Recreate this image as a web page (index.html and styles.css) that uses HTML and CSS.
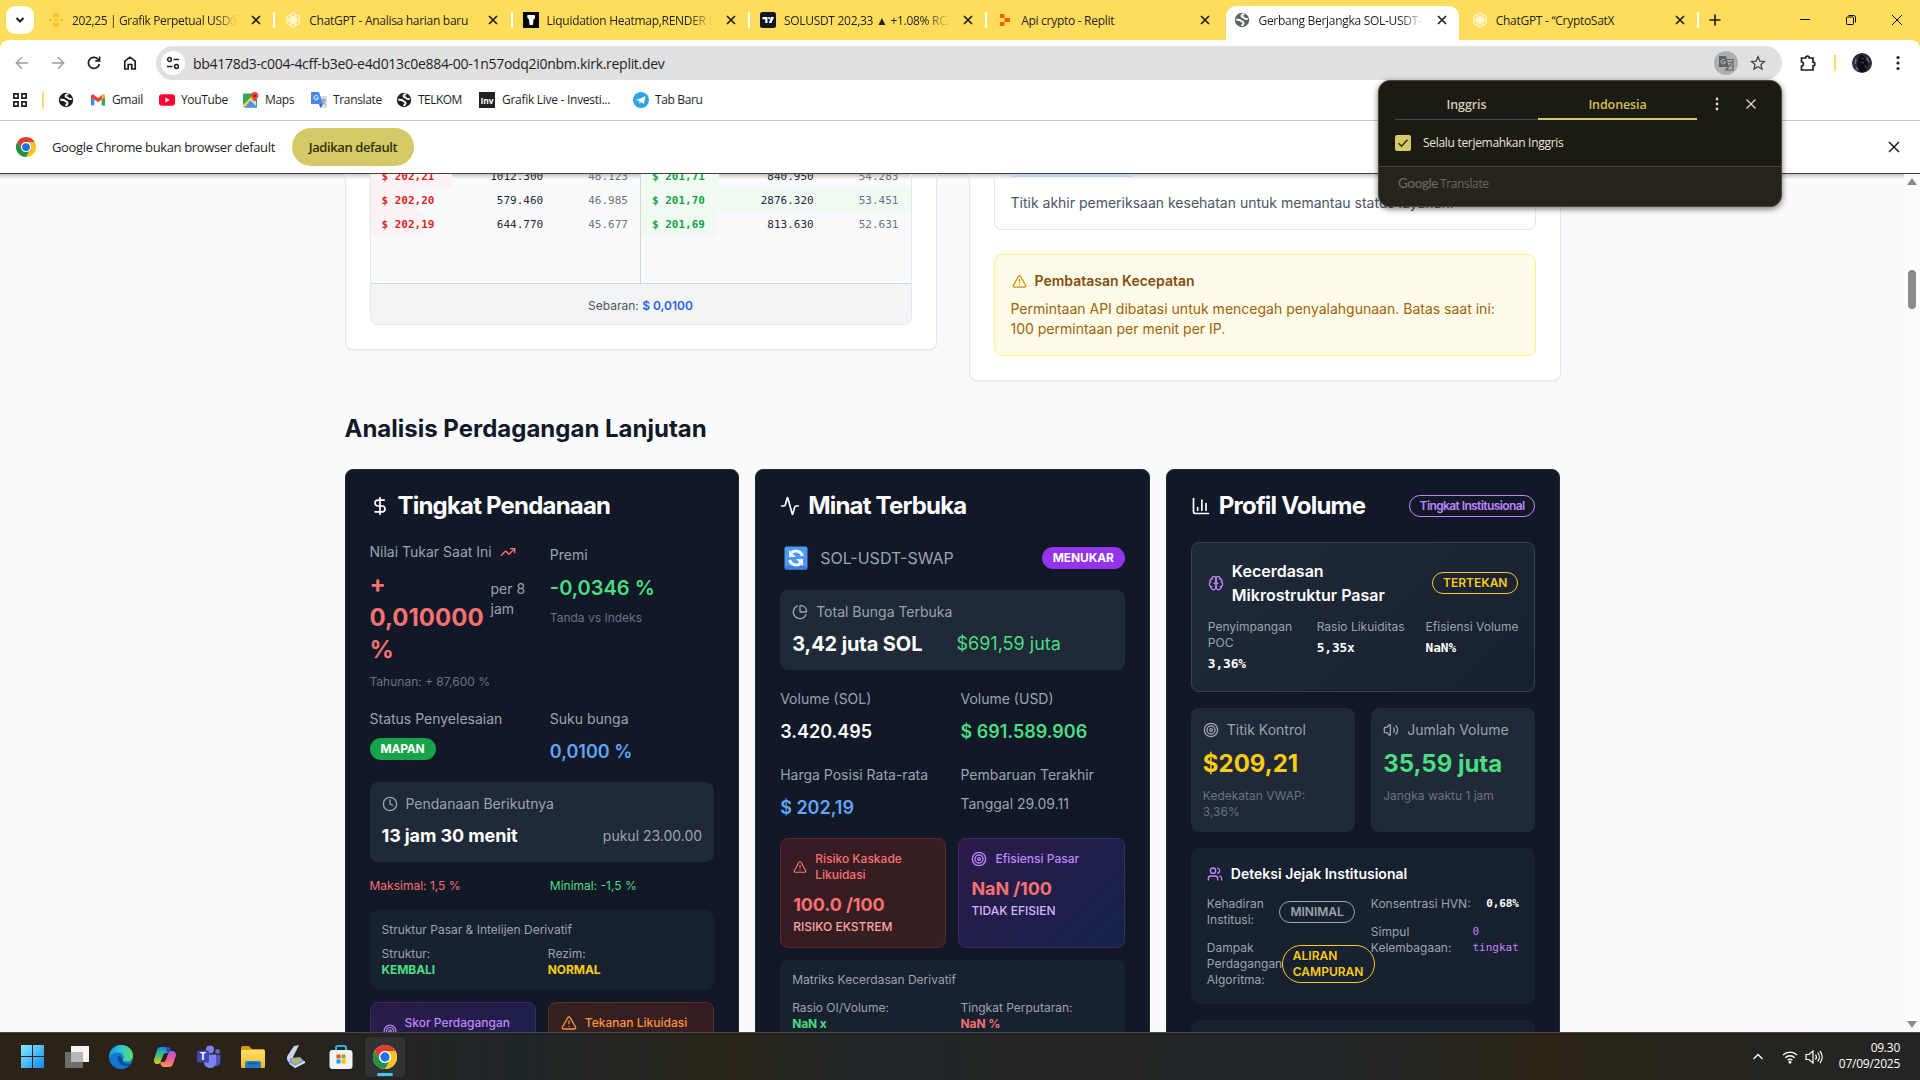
FILE: index.html
```html
<!DOCTYPE html>
<html lang="id">
<head>
<meta charset="utf-8">
<title>Gerbang Berjangka SOL-USDT-SWAP</title>
<link rel="stylesheet" href="styles.css">
</head>
<body>
<svg class="defs" width="0" height="0">
  <defs>
    <symbol id="x" viewBox="0 0 16 16"><path d="M4 4l8 8M12 4l-8 8" fill="none" stroke="currentColor" stroke-width="1.7"/></symbol>
    <symbol id="globe" viewBox="0 0 16 16"><circle cx="8" cy="8" r="7.200" fill="currentColor"/><path d="M2.300 7.800c2.200-.2 3.700-.3 4.700 1 .8 1.200 2.800.6 2.600 2.400-.1 1.200-1.500 1.300-1.700 2.800M10.500 2.300c-1.500-.4-3.300.5-3 2 .3 1.300 2.200.5 2.500 1.800.3 1 2 1 3.700.9" fill="none" stroke="#fff" stroke-width="1.900"/></symbol>
    <symbol id="gpt" viewBox="0 0 16 16"><g fill="none" stroke="#fff8dd" stroke-width="1.100"><ellipse cx="8" cy="5" rx="3" ry="4"/><ellipse cx="8" cy="5" rx="3" ry="4" transform="rotate(60 8 8)"/><ellipse cx="8" cy="5" rx="3" ry="4" transform="rotate(120 8 8)"/><ellipse cx="8" cy="5" rx="3" ry="4" transform="rotate(180 8 8)"/><ellipse cx="8" cy="5" rx="3" ry="4" transform="rotate(240 8 8)"/><ellipse cx="8" cy="5" rx="3" ry="4" transform="rotate(300 8 8)"/></g></symbol>
    <symbol id="chrome" viewBox="0 0 48 48"><circle cx="24" cy="24" r="24" fill="#fff"/><path d="M24 12h20.800A24 24 0 0 0 3.200 12l10.400 18A12 12 0 0 1 24 12z" fill="#e33b2e"/><path d="M34.400 30L24 48A24 24 0 0 0 44.800 12H24a12 12 0 0 1 10.400 18z" fill="#fcc31e"/><path d="M13.600 30L3.200 12A24 24 0 0 0 24 48l10.400-18a12 12 0 0 1-20.800 0z" fill="#229342"/><circle cx="24" cy="24" r="11.500" fill="#fff"/><circle cx="24" cy="24" r="9.300" fill="#1a73e8"/></symbol>
    <symbol id="target" viewBox="0 0 24 24"><g class="ln"><circle cx="12" cy="12" r="10"/><circle cx="12" cy="12" r="6"/><circle cx="12" cy="12" r="2"/></g></symbol>
    <symbol id="alert" viewBox="0 0 24 24"><g class="ln"><path d="m21.730 18-8-14a2 2 0 0 0-3.480 0l-8 14A2 2 0 0 0 4 21h16a2 2 0 0 0 1.730-3"/><path d="M12 9v4"/><path d="M12 17h.01"/></g></symbol>
    <symbol id="dollar" viewBox="0 0 24 24"><g class="ln"><path d="M12 2v20"/><path d="M17 5H9.500a3.500 3.500 0 0 0 0 7h5a3.500 3.500 0 0 1 0 7H6"/></g></symbol>
    <symbol id="trend" viewBox="0 0 24 24"><g class="ln"><path d="m22 7-8.500 8.500-5-5L2 17"/><path d="M16 7h6v6"/></g></symbol>
    <symbol id="clock" viewBox="0 0 24 24"><g class="ln"><circle cx="12" cy="12" r="10"/><path d="M12 6v6l4 2"/></g></symbol>
    <symbol id="activity" viewBox="0 0 24 24"><g class="ln"><path d="M22 12h-2.480a2 2 0 0 0-1.930 1.460l-2.350 8.360a.25.25 0 0 1-.48 0L9.240 2.180a.25.25 0 0 0-.48 0l-2.350 8.360A2 2 0 0 1 4.490 12H2"/></g></symbol>
    <symbol id="pie" viewBox="0 0 24 24"><g class="ln"><path d="M21 12c.552 0 1.005-.449.950-.998a10 10 0 0 0-8.953-8.951c-.55-.055-.998.398-.998.950v8a1 1 0 0 0 1 1z"/><path d="M21.210 15.890A10 10 0 1 1 8 2.830"/></g></symbol>
    <symbol id="chart" viewBox="0 0 24 24"><g class="ln"><path d="M3 3v16a2 2 0 0 0 2 2h16"/><path d="M18 17V9"/><path d="M13 17V5"/><path d="M8 17v-3"/></g></symbol>
    <symbol id="brain" viewBox="0 0 24 24"><g class="ln"><path d="M12 5a3 3 0 1 0-5.997.125 4 4 0 0 0-2.526 5.770 4 4 0 0 0 .556 6.588A4 4 0 1 0 12 18Z"/><path d="M12 5a3 3 0 1 1 5.997.125 4 4 0 0 1 2.526 5.770 4 4 0 0 1-.556 6.588A4 4 0 1 1 12 18Z"/><path d="M15 13a4.500 4.500 0 0 1-3-4 4.500 4.500 0 0 1-3 4"/><path d="M17.599 6.500a3 3 0 0 0 .399-1.375M6.003 5.125A3 3 0 0 0 6.401 6.500M3.477 10.896a4 4 0 0 1 .585-.396M19.938 10.500a4 4 0 0 1 .585.396M6 18a4 4 0 0 1-1.967-.516M19.967 17.484A4 4 0 0 1 18 18"/></g></symbol>
    <symbol id="volume" viewBox="0 0 24 24"><g class="ln"><path d="M11 4.702a.705.705 0 0 0-1.203-.498L6.413 7.587A1.400 1.400 0 0 1 5.416 8H3a1 1 0 0 0-1 1v6a1 1 0 0 0 1 1h2.416a1.400 1.400 0 0 1 .997.413l3.383 3.384A.705.705 0 0 0 11 19.298z"/><path d="M16 9a5 5 0 0 1 0 6"/><path d="M19.364 18.364a9 9 0 0 0 0-12.728"/></g></symbol>
    <symbol id="users" viewBox="0 0 24 24"><g class="ln"><path d="M16 21v-2a4 4 0 0 0-4-4H6a4 4 0 0 0-4 4v2"/><circle cx="9" cy="7" r="4"/><path d="M22 21v-2a4 4 0 0 0-3-3.870"/><path d="M16 3.130a4 4 0 0 1 0 7.750"/></g></symbol>
    <linearGradient id="win" x2="1" y2="1"><stop stop-color="#8ceaff"/><stop offset="1" stop-color="#0a8df5"/></linearGradient>
    <linearGradient id="edge" x2="1" y2="0"><stop stop-color="#1797dc"/><stop offset=".5" stop-color="#2fc2d8"/><stop offset="1" stop-color="#5fdf55"/></linearGradient>
    <linearGradient id="folder" x2="0" y2="1"><stop stop-color="#ffdf6b"/><stop offset="1" stop-color="#f8b92a"/></linearGradient>
    <linearGradient id="cop1" x2="0" y2="1"><stop stop-color="#1a86e8"/><stop offset=".5" stop-color="#3fc07a"/><stop offset="1" stop-color="#f5c320"/></linearGradient>
    <linearGradient id="cop2" x2="0" y2="1"><stop stop-color="#a65af0"/><stop offset=".5" stop-color="#ee5a9a"/><stop offset="1" stop-color="#ff9a4a"/></linearGradient>
  </defs>
</svg>

<header class="tabs">
  <div class="tab-search"><svg width="12" height="12" viewBox="0 0 12 12"><path d="M2.500 4L6 7.500 9.500 4" fill="none" stroke="#1f1f1f" stroke-width="2"/></svg></div>
  <div class="tab"><svg class="fav" viewBox="0 0 16 16"><path d="M8 .5l3.600 3.600-1.700 1.700L8 3.900 6.100 5.800 4.400 4.100zM2.200 6.300L3.900 8 2.200 9.700.5 8zM8 6.300L9.700 8 8 9.700 6.300 8zM13.800 6.300L15.500 8l-1.700 1.700L12.100 8zM6.100 10.200L8 12.100l1.900-1.900 1.700 1.700L8 15.500l-3.600-3.600z" fill="#fbbc2c"/></svg><span class="t fade t1">202,25 | Grafik Perpetual USDⓈ-M</span><svg class="cl"><use href="#x"/></svg></div>
  <div class="tab"><svg class="fav"><use href="#gpt"/></svg><span class="t">ChatGPT - Analisa harian baru</span><svg class="cl"><use href="#x"/></svg></div>
  <div class="tab"><svg class="fav" viewBox="0 0 16 16"><path fill="#050505" d="M0 0h16v16H0z"/><path d="M4.500 3h7l.7 1.500-.7 2.500-1 .5-.5 5.500H6.500L6 7.500l-1-.5-.8-2.500z" fill="#fff"/></svg><span class="t fade">Liquidation Heatmap,RENDER Liq</span><svg class="cl"><use href="#x"/></svg></div>
  <div class="tab"><svg class="fav" viewBox="0 0 16 16"><rect width="16" height="16" rx="2.500" fill="#131722"/><path d="M2.500 5h5v6H5.200V7.300H2.500zM11 5h3l-2.500 6H8.800z" fill="#fff"/><circle cx="9.200" cy="6.100" r="1.150" fill="#fff"/></svg><span class="t fade">SOLUSDT 202,33 ▲ +1.08% RCZ</span><svg class="cl"><use href="#x"/></svg></div>
  <div class="tab plain"><svg class="fav" viewBox="0 0 16 16"><path d="M3 2h4.500v4H3zM7.500 6H13v4H7.500zM3 10h4.500v4H3z" fill="#f26207"/></svg><span class="t">Api crypto - Replit</span><svg class="cl"><use href="#x"/></svg></div>
  <div class="tab plain active"><svg class="fav grey"><use href="#globe"/></svg><span class="t fade">Gerbang Berjangka SOL-USDT-SWAP</span><svg class="cl"><use href="#x"/></svg></div>
  <div class="tab"><svg class="fav"><use href="#gpt"/></svg><span class="t">ChatGPT - “CryptoSatX</span><svg class="cl"><use href="#x"/></svg></div>
  <svg class="plus" width="16" height="16" viewBox="0 0 16 16"><path d="M8 2.500v11M2.500 8h11" stroke="#1f1f1f" stroke-width="1.700"/></svg>
  <div class="win">
    <svg width="12" height="12" viewBox="0 0 12 12"><path d="M1 5.500h10" stroke="#000"/></svg>
    <svg width="12" height="12" viewBox="0 0 12 12"><path d="M3.500 1.500h5a2 2 0 0 1 2 2v5" fill="none" stroke="#000"/><rect x="1.500" y="3" width="7" height="7.500" rx="1" fill="none" stroke="#000"/></svg>
    <svg width="12" height="12" viewBox="0 0 12 12"><path d="M1 1l10 10M11 1L1 11" stroke="#000"/></svg>
  </div>
</header>

<div class="toolbar">
  <div class="nav">
    <svg class="dim" viewBox="0 0 16 16"><path d="M14 8H2.500M8 2.200L2.300 8 8 13.800"/></svg>
    <svg class="dim" viewBox="0 0 16 16"><path d="M2 8h11.500M8 2.200L13.700 8 8 13.800"/></svg>
    <svg viewBox="0 0 16 16"><path d="M13.300 9A5.500 5.500 0 1 1 11.800 4L13.500 5.600M13.600 1.500v4.400H9.200"/></svg>
    <svg viewBox="0 0 16 16"><path d="M2.800 14V6.200L8 2.200l5.200 4V14H9.800V9.500H6.200V14z"/></svg>
  </div>
  <div class="omni">
    <div class="site"><svg width="16" height="16" viewBox="0 0 16 16" fill="none" stroke="#1f1f1f" stroke-width="1.500"><circle cx="4.500" cy="4.500" r="1.900"/><path d="M8.500 4.500H14M2 11.500h5.500"/><circle cx="11.500" cy="11.500" r="1.900"/></svg></div>
    <span class="url">bb4178d3-c004-4cff-b3e0-e4d013c0e884-00-1n57odq2i0nbm.kirk.replit.dev</span>
    <div class="tr"><svg width="16" height="16" viewBox="0 0 16 16"><path d="M1 1h7l3 11H1z" fill="#5f6368"/><path d="M9 4.500h6V15H8l2.500-3" fill="none" stroke="#5f6368" stroke-width="1.200"/><path d="M7 5.400a2.200 2.200 0 1 0 .4 1.600H5.600" fill="none" stroke="#c9c9c9"/><path d="M10.500 7.500h4M12.500 6.500v1M13.700 7.500c-.4 2-1.500 3.500-2.800 4.300M11.500 9l2.500 3" fill="none" stroke="#5f6368" stroke-width=".9"/></svg></div>
    <svg width="16" height="16" viewBox="0 0 18 18"><path d="M9 2l2.100 4.800 5.200.5-3.900 3.500 1.100 5.100L9 13.200l-4.500 2.700 1.100-5.100-3.900-3.500 5.200-.5z" fill="none" stroke="#474747" stroke-width="1.500"/></svg>
  </div>
  <svg class="ext" width="18" height="18" viewBox="0 0 18 18"><path d="M2.500 4h4.200a1.800 1.800 0 0 1 3.600 0H14v4.200a1.800 1.800 0 0 1 0 3.600V16H2.500v-3.800c2.500 0 2.500-4.200 0-4.200z" fill="none" stroke="#1f1f1f" stroke-width="1.700"/></svg>
  <i class="vsep"></i>
  <svg class="avatar" width="20" height="20" viewBox="0 0 20 20"><circle cx="10" cy="10" r="10" fill="#2a2d42"/><path d="M8 2c3-1 5 1 5 4l3 4-2 8-5 1-4-5 1-6z" fill="#0b0c14"/><path d="M9 5l3 1M8 9l4 1M13 12l1 3" stroke="#8b2f3a"/><path d="M15 5l2 4M4 6l-1 5M4 14l2 3" stroke="#6b7296" stroke-width="1.500"/></svg>
  <svg class="dots" width="4" height="16" viewBox="0 0 4 16" fill="#1f1f1f"><circle cx="2" cy="2.500" r="1.600"/><circle cx="2" cy="8" r="1.600"/><circle cx="2" cy="13.500" r="1.600"/></svg>
</div>

<div class="bookmarks">
  <svg class="grid4" width="16" height="16" viewBox="0 0 16 16" fill="none" stroke="#1f1f1f" stroke-width="1.700"><path d="M1.900 1.900h4.200v4.200H1.900zM9.900 1.900h4.200v4.200H9.900zM1.900 9.900h4.200v4.200H1.900zM9.900 9.900h4.200v4.200H9.900z"/></svg>
  <i class="vsep"></i>
  <svg class="bi g1"><use href="#globe"/></svg>
  <span class="bm b1"><svg class="bi" viewBox="0 0 16 16"><path d="M1 13.500V4l3.300 2.500v7z" fill="#4285f4"/><path d="M11.700 6.500L15 4v9.500h-3.300z" fill="#34a853"/><path d="M1 4c0-1.500 1.600-2 2.600-1.300L8 6l4.400-3.300C13.400 2 15 2.500 15 4v1l-7 5.200L1 5z" fill="#ea4335"/><path d="M11.700 3.200L15 3v2.200l-3.300 2.400z" fill="#fbbc04"/></svg><span class="bt">Gmail</span></span>
  <span class="bm b2"><svg class="bi" viewBox="0 0 16 16"><rect y="2.300" width="16" height="11.500" rx="3" fill="#f03"/><path d="M6.300 5.500v5L10.700 8z" fill="#fff"/></svg><span class="bt">YouTube</span></span>
  <span class="bm b3"><svg class="bi" viewBox="0 0 16 16"><rect y="1.500" width="14" height="14" rx="1" fill="#34a853"/><path d="M0 13L10 3l2 2L2 15.500H0z" fill="#fbd14b"/><path d="M7 9l7 6.500H1.500z" fill="#4f8df6"/><path d="M7 8l6 6V9z" fill="#dfe3e8"/><path d="M11.700 0a3.700 3.700 0 0 1 3.700 3.700c0 2.500-3 3.500-3.700 6.300-.7-2.800-3.700-3.800-3.700-6.300A3.700 3.700 0 0 1 11.700 0z" fill="#e8453c"/><circle cx="11.700" cy="3.700" r="1.300" fill="#7b211c"/></svg><span class="bt">Maps</span></span>
  <span class="bm b4"><svg class="bi" viewBox="0 0 16 16"><path d="M6 4h10v12H9z" fill="#d8dbe0"/><path d="M0 0h8l4 12H0z" fill="#4a87ee"/><path d="M8 12h4l-2.500 4z" fill="#3367d6"/><path d="M7 4.500A2.200 2.200 0 1 0 7.300 6H5.200" fill="none" stroke="#fff"/><path d="M10.500 8h4M12.500 7v1M14 8c-.5 2-1.500 3.500-3 4M11.500 9.500l2.500 3" fill="none" stroke="#75808c" stroke-width=".9"/></svg><span class="bt">Translate</span></span>
  <span class="bm b5"><svg class="bi"><use href="#globe"/></svg><span class="bt">TELKOM</span></span>
  <span class="bm b6"><span class="inv">Inv</span><span class="bt">Grafik Live - Investi...</span></span>
  <span class="bm b7"><svg class="bi" viewBox="0 0 16 16"><circle cx="8" cy="8" r="8" fill="#2ca5e0"/><path d="M3 8l9.500-3.800L10.800 12 8 10l-1.500 1.500L6.200 9z" fill="#fff"/></svg><span class="bt">Tab Baru</span></span>
</div>

<div class="infobar">
  <svg width="20" height="20"><use href="#chrome"/></svg>
  <span class="msg">Google Chrome bukan browser default</span>
  <button class="mk">Jadikan default</button>
  <svg class="ix" width="16" height="16" viewBox="0 0 16 16"><path d="M3 3l10 10M13 3L3 13" stroke="#1f1f1f" stroke-width="1.500"/></svg>
</div>

<div class="page">
 <main>
  <div class="top">
    <section class="card book">
      <div class="inner">
        <div class="sides">
          <div class="side ask">
            <div class="r"><i style="width:81px"></i><b>$ 202,21</b><span>1012.300</span><em>48.123</em></div>
            <div class="r"><i style="width:46px"></i><b>$ 202,20</b><span>579.460</span><em>46.985</em></div>
            <div class="r"><i style="width:52px"></i><b>$ 202,19</b><span>644.770</span><em>45.677</em></div>
          </div>
          <div class="side bid">
            <div class="r"><i style="width:78px"></i><b>$ 201,71</b><span>840.950</span><em>54.283</em></div>
            <div class="r"><i style="width:270px"></i><b>$ 201,70</b><span>2876.320</span><em>53.451</em></div>
            <div class="r"><i style="width:76px"></i><b>$ 201,69</b><span>813.630</span><em>52.631</em></div>
          </div>
        </div>
        <div class="spread">Sebaran: <b>$ 0,0100</b></div>
      </div>
    </section>
    <section class="card api">
      <div class="ep"><i class="pill"></i><p>Titik akhir pemeriksaan kesehatan untuk memantau status layanan.</p></div>
      <div class="limit">
        <h4><svg width="15" height="15" class="w"><use href="#alert"/></svg>Pembatasan Kecepatan</h4>
        <p>Permintaan API dibatasi untuk mencegah penyalahgunaan. Batas saat ini: 100 permintaan per menit per IP.</p>
      </div>
    </section>
  </div>

  <h2>Analisis Perdagangan Lanjutan</h2>

  <div class="cols">
    <article>
      <h3><svg class="i20"><use href="#dollar"/></svg>Tingkat Pendanaan</h3>
      <div class="two rates">
        <div>
          <div class="lab">Nilai Tukar Saat Ini<svg class="i16 red"><use href="#trend"/></svg></div>
          <div class="rate"><span class="big red">+ 0,010000 %</span><span class="per">per 8 jam</span></div>
          <div class="sm mut ann">Tahunan: + 87,600 %</div>
        </div>
        <div class="prem">
          <div class="lab">Premi</div>
          <div class="v20 green">-0,0346 %</div>
          <div class="sm mut">Tanda vs Indeks</div>
        </div>
      </div>
      <div class="two settle">
        <div><div class="lab">Status Penyelesaian</div><span class="badge gbg">MAPAN</span></div>
        <div><div class="lab">Suku bunga</div><div class="v18 blue">0,0100 %</div></div>
      </div>
      <div class="box next">
        <div class="lab"><svg class="i16"><use href="#clock"/></svg>Pendanaan Berikutnya</div>
        <div class="row"><span class="v18 bold white">13 jam 30 menit</span><span class="lab">pukul 23.00.00</span></div>
      </div>
      <div class="two sm lim"><div class="red">Maksimal: 1,5 %</div><div class="green">Minimal: -1,5 %</div></div>
      <div class="box half struct">
        <div class="sm">Struktur Pasar &amp; Intelijen Derivatif</div>
        <div class="two g12 sm"><div>Struktur:<br><b class="green">KEMBALI</b></div><div>Rezim:<br><b class="yel">NORMAL</b></div></div>
      </div>
      <div class="two g12 tiles">
        <div class="tile pur"><div class="th"><svg class="i14"><use href="#target"/></svg><span>Skor Perdagangan Institusional</span></div></div>
        <div class="tile ora"><div class="th"><svg class="i16"><use href="#alert"/></svg><span>Tekanan Likuidasi</span></div></div>
      </div>
    </article>

    <article>
      <h3><svg class="i20"><use href="#activity"/></svg>Minat Terbuka</h3>
      <div class="inst">
        <svg width="24" height="24" viewBox="0 0 24 24"><rect x=".5" y=".5" width="23" height="23" rx="2" fill="#4b9bf5"/><rect x="1" y="20" width="22" height="3.500" rx="1.500" fill="#3b7fe0"/><path d="M18.500 10a7 7 0 0 0-11-3.500M5.500 14a7 7 0 0 0 11 3.500" fill="none" stroke="#f4f3ff" stroke-width="3"/><path d="M5 4v7h7zM19 20v-7h-7z" fill="#f4f3ff"/></svg>
        <span class="sym">SOL-USDT-SWAP</span><span class="badge pbg">MENUKAR</span>
      </div>
      <div class="box oi">
        <div class="lab"><svg class="i16"><use href="#pie"/></svg>Total Bunga Terbuka</div>
        <div class="two"><span class="v20 bold white">3,42 juta SOL</span><span class="v18 green reg">$691,59 juta</span></div>
      </div>
      <div class="two vols">
        <div><div class="lab">Volume (SOL)</div><div class="v18 white">3.420.495</div></div>
        <div><div class="lab">Volume (USD)</div><div class="v18 green">$ 691.589.906</div></div>
        <div><div class="lab">Harga Posisi Rata-rata</div><div class="v18 blue">$ 202,19</div></div>
        <div><div class="lab">Pembaruan Terakhir</div><div class="lab upd">Tanggal 29.09.11</div></div>
      </div>
      <div class="two g12 risk">
        <div class="tile rd"><div class="th"><svg class="i14"><use href="#alert"/></svg><span>Risiko Kaskade Likuidasi</span></div><div class="v18 bold red">100.0 /100</div><div class="sm med pink">RISIKO EKSTREM</div></div>
        <div class="tile pur"><div class="th"><svg class="i16"><use href="#target"/></svg><span>Efisiensi Pasar</span></div><div class="v18 bold red">NaN /100</div><div class="sm med lilac">TIDAK EFISIEN</div></div>
      </div>
      <div class="box half matrix">
        <div class="sm">Matriks Kecerdasan Derivatif</div>
        <div class="two sm"><div>Rasio OI/Volume:<br><b class="green">NaN x</b></div><div>Tingkat Perputaran:<br><b class="red">NaN %</b></div></div>
      </div>
    </article>

    <article>
      <h3><svg class="i20"><use href="#chart"/></svg>Profil Volume<span class="badge outp">Tingkat Institusional</span></h3>
      <div class="box micro">
        <div class="mh"><svg class="i16 purc"><use href="#brain"/></svg><strong>Kecerdasan Mikrostruktur Pasar</strong><span class="badge outy">TERTEKAN</span></div>
        <div class="three sm">
          <div>Penyimpangan POC<b class="mono">3,36%</b></div>
          <div>Rasio Likuiditas<b class="mono">5,35x</b></div>
          <div>Efisiensi Volume<b class="mono">NaN%</b></div>
        </div>
      </div>
      <div class="two pv">
        <div class="box"><div class="lab"><svg class="i16"><use href="#target"/></svg>Titik Kontrol</div><div class="big yel">$209,21</div><div class="sm mut">Kedekatan VWAP: 3,36%</div></div>
        <div class="box"><div class="lab"><svg class="i16"><use href="#volume"/></svg>Jumlah Volume</div><div class="big green">35,59 juta</div><div class="sm mut">Jangka waktu 1 jam</div></div>
      </div>
      <div class="box half inst2">
        <div class="ih"><svg class="i16 purc"><use href="#users"/></svg>Deteksi Jejak Institusional</div>
        <div class="foot sm">
          <div class="fc">
            <div class="fr"><span>Kehadiran Institusi:</span><span class="badge outg">MINIMAL</span></div>
            <div class="fr"><span>Dampak Perdagangan Algoritma:</span><span class="badge outy lg">ALIRAN CAMPURAN</span></div>
          </div>
          <div class="fc">
            <div class="fr"><span>Konsentrasi HVN:</span><b class="mono12 white">0,68%</b></div>
            <div class="fr"><span class="simpul">Simpul Kelembagaan:</span><span class="mono12 purc lv">0 tingkat</span></div>
          </div>
        </div>
      </div>
      <div class="box half more"></div>
    </article>
  </div>
 </main>
 <div class="sbar"><i class="up"></i><i class="thumb"></i><i class="down"></i></div>
</div>

<footer class="taskbar">
  <div class="apps">
    <span><svg width="23" height="23" viewBox="0 0 23 23" fill="url(#win)"><path d="M0 0h11v11H0zM12 0h11v11H12zM0 12h11v11H0zM12 12h11v11H12z"/></svg></span>
    <span><svg width="24" height="24" viewBox="0 0 24 24"><rect x="6" y="1" width="18" height="16" fill="#f3f3f3"/><rect y="7" width="18" height="16" fill="#777" opacity=".9"/><rect x="6" y="7" width="12" height="10" fill="#b5b5b5"/></svg></span>
    <span><svg width="24" height="24" viewBox="0 0 24 24"><circle cx="12" cy="12" r="12" fill="#1477cf"/><path d="M0 11C1 4 6 0 12 0c7 0 12 5 12 10.500 0 4-3 6-6 6-3.500 0-4.500-1.500-4-2.500 2-3-1-6.500-5-6.500-5 0-8 3-9 6z" fill="url(#edge)"/><path d="M8.500 12c-.5 5 4 9.500 9.500 9 2-.3 3.500-1.500 4.200-2.500C19 19.500 13 19 13.500 14c-1.500-3-4.500-4-5-2z" fill="#0c4f9e"/></svg></span>
    <span><svg width="24" height="24" viewBox="0 0 24 24"><path d="M8 2h6c2 0 2.500 1.500 3 3l1 3h-5c-1.500 0-2.500 1-3 2.500L7.500 17c-.5 1.200-1.200 2-3 2C2 19 .5 17 1.200 14L4 5c.6-2 1.800-3 4-3z" fill="url(#cop1)"/><path d="M12 2h2.500c2 0 2.500 1.500 3 3l1 3h-4z" fill="#2250d8"/><path d="M16 22h-5c-2 0-3-1.500-3.500-3L7 17h3c1.500 0 2.500-1 3-2.500L15.500 8c.5-1 1.200-2 3.500-2 2.500 0 4.500 2 3.800 5L20 19c-.6 2-1.800 3-4 3z" fill="url(#cop2)"/></svg></span>
    <span><svg width="24" height="24" viewBox="0 0 24 24"><circle cx="13" cy="4.500" r="4" fill="#7b83eb"/><circle cx="20.500" cy="6.500" r="2.500" fill="#5b62c9"/><path d="M15 10h8.500v6c0 3-2 5-4.500 5s-4-2-4-5z" fill="#4b53bc"/><path d="M7 9.500h12V17c0 4-2.500 6-6 6s-6-2.500-6-6z" fill="#7b83eb"/><rect y="5.500" width="12" height="12" rx="1.500" fill="#3f48b0"/></svg><b class="tm">T</b></span>
    <span><svg width="24" height="22" viewBox="0 0 24 22"><path d="M0 2a2 2 0 0 1 2-2h6l3 3h11a2 2 0 0 1 2 2v3H0z" fill="#d99a12"/><rect y="4" width="24" height="18" rx="1.500" fill="url(#folder)"/><path d="M4 22v-5a2 2 0 0 1 2-2h12a2 2 0 0 1 2 2v5z" fill="#1a7fc9"/><path d="M7 17.500h10" stroke="#0b5a9a" stroke-width="1.500"/></svg></span>
    <span><svg width="22" height="24" viewBox="0 0 22 24"><path d="M8 1l5-1-6 12 1 4-4 2c-3-2-4-5-2-8z" fill="#c9d6f2"/><path d="M4 13l10-1 5 5-10 6-6-4z" fill="#7ea3dc"/><path d="M5 14l8-1 3 3-8 3z" fill="#b9b565"/><path d="M2 17l7 4 10-5v2L9 23z" fill="#dbe6fb"/></svg></span>
    <span><svg width="24" height="24" viewBox="0 0 24 24"><path d="M7 7V2.500A1.500 1.500 0 0 1 8.500 1h7A1.500 1.500 0 0 1 17 2.500V7" fill="none" stroke="#26b0ee" stroke-width="2"/><rect x=".5" y="5" width="23" height="19" rx="3" fill="#f2f2f2"/><path fill="#f25022" d="M7.500 9.500h4v4h-4z"/><path fill="#7fba00" d="M12.500 9.500h4v4h-4z"/><path fill="#00a4ef" d="M7.500 14.500h4v4h-4z"/><path fill="#ffb900" d="M12.500 14.500h4v4h-4z"/></svg></span>
    <span class="on"><svg width="24" height="24"><use href="#chrome"/></svg></span>
  </div>
  <div class="tray">
    <svg width="12" height="12" viewBox="0 0 12 12"><path d="M1.500 8L6 3.500 10.500 8" fill="none" stroke="#fff" stroke-width="1.300"/></svg>
    <svg class="wifi" width="16" height="14" viewBox="0 0 16 14" fill="none" stroke="#fff" stroke-width="1.300"><path d="M1 5a10 10 0 0 1 14 0M3.300 7.700a6.700 6.700 0 0 1 9.400 0M5.600 10.200a3.500 3.500 0 0 1 4.800 0"/><circle cx="8" cy="12.200" r=".8" fill="#fff"/></svg>
    <svg class="snd" width="18" height="16" viewBox="0 0 18 16" fill="none" stroke="#fff" stroke-width="1.200"><path d="M1 5.500h3L8 2v12l-4-3.500H1zM10.500 5.500a4 4 0 0 1 0 5M12.700 3.700a6.500 6.500 0 0 1 0 8.600M14.900 2a9 9 0 0 1 0 12"/></svg>
    <div class="clk"><div>09.30</div><div>07/09/2025</div></div>
  </div>
</footer>

<aside class="popup">
  <div class="ph"><span class="p1">Inggris</span><span class="p2">Indonesia</span>
    <svg class="pd" width="4" height="14" viewBox="0 0 4 14" fill="#d8d6c8"><circle cx="2" cy="2" r="1.400"/><circle cx="2" cy="7" r="1.400"/><circle cx="2" cy="12" r="1.400"/></svg>
    <svg class="px" width="14" height="14" viewBox="0 0 14 14"><path d="M2.500 2.500l9 9M11.500 2.500l-9 9" stroke="#d8d6c8" stroke-width="1.400"/></svg></div>
  <div class="pc"><i><svg width="16" height="16" viewBox="0 0 16 16"><path d="M3.500 8.200l3 3 6-6.400" fill="none" stroke="#33300a" stroke-width="1.500"/></svg></i><span>Selalu terjemahkan Inggris</span></div>
  <div class="pf"><b>Google</b> <span>Translate</span></div>
</aside>
</body>
</html>
```
FILE: styles.css
```css
* { box-sizing: border-box; }
body { margin: 0; width: 1920px; height: 1080px; overflow: hidden; position: relative; display: flex; flex-direction: column; font-family: "Open Sans", "Noto Sans", sans-serif; font-size: 12px; color: #1f1f1f; background: #fff; }
svg { display: block; flex: none; }
.defs { position: absolute; }
p, h2, h3, h4 { margin: 0; }
.ln { fill: none; stroke: currentColor; stroke-width: 2; stroke-linecap: round; stroke-linejoin: round; }

/* tab strip */
.tabs { height: 40px; flex: none; background: #ffdd5c; display: flex; align-items: center; }
.tab-search { width: 28px; height: 28px; margin: 0 4px 0 6px; border-radius: 9px; background: #fff; display: grid; place-items: center; }
.tab { position: relative; width: 237.3px; height: 40px; flex: none; padding-left: 10px; display: flex; align-items: center; }
.tab:not(.plain)::after { content: ""; position: absolute; right: 0; top: 12px; width: 2px; height: 16px; background: #fff; border-radius: 1px; }
.fav { width: 16px; height: 16px; margin-right: 8px; }
.fav.grey { color: #5f6368; }
.t { width: 166px; margin-right: 10px; white-space: nowrap; overflow: hidden; letter-spacing: -.29px; line-height: 20px; padding-top: 1px; }
.t1 { letter-spacing: -.36px; }
.fade { -webkit-mask-image: linear-gradient(90deg, #000 142px, transparent 166px); mask-image: linear-gradient(90deg, #000 142px, transparent 166px); }
.cl { width: 16px; height: 16px; }
.active::before { content: ""; position: absolute; z-index: 0; left: 2px; right: 3px; top: 6px; bottom: 0; background: #fff; border-radius: 10px 10px 0 0; }
.active > * { position: relative; }
.plus { margin-left: 8px; }
.win { margin-left: auto; display: flex; gap: 34px; padding-right: 17px; }

/* toolbar */
.toolbar { height: 46px; flex: none; display: flex; align-items: center; position: relative; }
.toolbar::before { content: ""; position: absolute; left: 0; top: 0; right: 0; height: 8px; background: radial-gradient(circle 8px at 8px 8px, #fff 7.500px, #ffdd5c 8px) 0 0/8px 8px no-repeat, radial-gradient(circle 8px at 0 8px, #fff 7.500px, #ffdd5c 8px) 100% 0/8px 8px no-repeat; }
.nav { display: flex; gap: 20px; margin-left: 14px; }
.nav svg { width: 16px; height: 16px; fill: none; stroke: #1f1f1f; stroke-width: 1.700; }
.nav .dim { stroke: #9c9c9c; stroke-width: 1.400; }
.omni { margin-left: 18px; width: 1626px; height: 34px; border-radius: 17px; background: #e0e0e0; display: flex; align-items: center; padding: 0 16px 0 5px; }
.site { width: 24px; height: 24px; border-radius: 50%; background: #fff; display: grid; place-items: center; margin-right: 8px; }
.url { flex: 1; font-size: 14px; letter-spacing: -.29px; white-space: nowrap; }
.tr { width: 24px; height: 24px; border-radius: 50%; background: #adadad; display: grid; place-items: center; margin-right: 12px; }
.ext { margin-left: 17px; }
.vsep { width: 2px; height: 16px; background: #ffdd5c; flex: none; }
.toolbar .vsep { margin-left: 17px; }
.avatar { margin-left: 16px; }
.dots { margin-left: 24px; }

/* bookmarks */
.bookmarks { height: 35px; flex: none; border-bottom: 1px solid #c9c9c9; padding: 0 0 6px 12px; display: flex; align-items: center; }
.bookmarks .vsep { margin-left: 14px; }
.bi { width: 16px; height: 16px; color: #1f1f1f; }
.g1 { margin-left: 14px; }
.bm { display: flex; align-items: center; }
.bt { margin-left: 6px; letter-spacing: -.35px; line-height: 16px; margin-top: -1px; white-space: nowrap; }
.b1 { margin-left: 16px; width: 69px; } .b2 { width: 84px; } .b3 { width: 68px; } .b4 { width: 85px; } .b5 { width: 83px; } .b6 { width: 154px; }
.b5 .bt { letter-spacing: -.55px; } .b6 .bt { letter-spacing: -.28px; margin-left: 7px; }
.inv { width: 16px; height: 16px; background: #222; color: #fff; font: 700 8.500px/17px "Open Sans", sans-serif; text-align: center; }

/* info bar */
.infobar { height: 53px; flex: none; border-bottom: 1px solid #45413a; display: flex; align-items: center; padding: 0 18px 0 16px; }
.msg { width: 240px; margin-left: 16px; font-size: 13px; letter-spacing: -.36px; white-space: nowrap; }
.mk { width: 122px; height: 38px; padding: 0; border: 0; border-radius: 19px; background: #d4c966; font: 600 13px "Open Sans", sans-serif; letter-spacing: -.4px; color: #363100; }
.ix { margin-left: auto; }

/* web page */
.page { height: 858px; flex: none; overflow: hidden; background: linear-gradient(#c4c4c4, #f9fafb00 5px), #f9fafb; display: flex; font-family: Inter, sans-serif; }
main { width: 1216px; margin-left: 344.500px; }
.top { display: grid; grid-template-columns: 592px 592px; gap: 32px; height: 207px; align-items: start; }
.card { background: linear-gradient(#c8c8c8, #fff0 5px), #fff; border: 1px solid #e5e7eb; border-top: 0; border-radius: 0 0 8px 8px; box-shadow: 0 1px 2px #0000000d; padding: 0 24px 24px; }
.book { height: 176px; }
.inner { height: 151px; border: 1px solid #e5e7eb; border-top: 0; border-radius: 0 0 8px 8px; overflow: hidden; background: linear-gradient(#c4c4c4, #f9fafb00 5px), #f9fafb; }
.sides { display: grid; grid-template-columns: 269.500px 270.500px; height: 109px; overflow: hidden; }
.side { margin-top: -10px; height: 119px; }
.bid { border-left: 1px solid #d1d5db; }
.r { position: relative; height: 24px; padding: 0 12px 0 11px; display: grid; grid-template-columns: repeat(3, 1fr); gap: 8px; align-items: center; font: 11px "DejaVu Sans Mono", monospace; color: #1f2937; text-align: right; }
.r i { position: absolute; left: 0; top: 0; bottom: 0; }
.ask i { background: #fbf3f3; } .bid i { background: #f0faf3; }
.r b, .r span, .r em { position: relative; font-style: normal; }
.r b { text-align: left; white-space: nowrap; }
.ask b { color: #dc2626; } .bid b { color: #16a34a; }
.r em { color: #6b7280; }
.spread { height: 42px; border-top: 1px solid #d1d5db; background: #f3f4f6; text-align: center; font-size: 12px; line-height: 43px; color: #4b5563; }
.spread b { color: #2563eb; font-weight: 600; }
.api { height: 207px; }
.ep { height: 56px; border: 1px solid #e5e7eb; border-top: 0; border-radius: 0 0 8px 8px; padding: 0 16px; }
.pill { display: block; width: 123px; height: 3px; background: #c3d3ee; border-radius: 0 0 4px 4px; }
.ep p { font-size: 14px; line-height: 20px; margin-top: 16px; color: #4b5563; }
.limit { margin-top: 24px; height: 102px; border: 1px solid #fef08a; border-radius: 8px; background: #fefce8; padding: 16px 16px 0; }
.limit h4 { font-size: 14px; font-weight: 600; line-height: 20px; color: #854d0e; display: flex; align-items: center; }
.w { margin: 0 8px 0 1px; color: #ca8a04; }
.limit p { font-size: 14px; line-height: 20px; margin-top: 8px; color: #a16207; }
h2 { font-size: 24px; line-height: 32px; font-weight: 700; color: #111827; margin: 32px 0 24px; }

.cols { display: grid; grid-template-columns: repeat(3, 1fr); gap: 16px; }
article { height: 620px; border: 1px solid #1f2937; border-radius: 8px; background: #111827; padding: 24px; color: #9ca3af; }
h3 { font-size: 24px; line-height: 24px; font-weight: 700; letter-spacing: -.8px; color: #fff; display: flex; align-items: center; height: 24px; }
.i20 { width: 20px; height: 20px; margin-right: 8px; }
.i16 { width: 16px; height: 16px; } .i14 { width: 14px; height: 14px; }
.two { display: grid; grid-template-columns: 1fr 1fr; column-gap: 16px; }
.g12 { column-gap: 12px; }
.lab { font-size: 14px; line-height: 20px; color: #9ca3af; display: flex; align-items: center; gap: 8px; white-space: nowrap; }
.sm { font-size: 12px; line-height: 16px; } .sm b { font-weight: 700; letter-spacing: -.1px; }
.mut { color: #6b7280; } .med { font-weight: 500; }
.red { color: #f87171; } .green { color: #4ade80; } .blue { color: #60a5fa; } .yel { color: #facc15; } .white { color: #fff; } .purc { color: #c084fc; } .pink { color: #fca5a5; } .lilac { color: #d8b4fe; }
.big { font-size: 24px; line-height: 32px; font-weight: 700; }
.v20 { font-size: 20px; line-height: 28px; font-weight: 600; }
.v18 { font-size: 18px; line-height: 28px; font-weight: 600; white-space: nowrap; }
.v18.bold, .v20.bold { font-weight: 700; letter-spacing: -.1px; } .v18.reg { font-weight: 400; }
.badge { display: inline-block; height: 22px; padding: 2px 11px; border-radius: 11px; font-size: 12px; line-height: 18px; font-weight: 700; white-space: nowrap; flex: none; }
.gbg { background: #16a34a; color: #fff; letter-spacing: -.2px; } .pbg { background: #9333ea; color: #fff; letter-spacing: -.1px; }
.outp, .outy, .outg { border: 1px solid; padding: 1px 10px; font-weight: 600; }
.outp { color: #c084fc; margin-left: auto; letter-spacing: -.6px; } .outy { color: #facc15; } .outg { color: #9ca3af; }
.box { background: #1f2937; border-radius: 8px; padding: 12px; }
.half { background: #18212f; }

.rates { margin-top: 24px; height: 148px; }
.rate { display: flex; margin-top: 8px; } .rate .big { width: 113px; } .per { margin: 9px 0 0 8px; width: 43px; font-size: 14px; line-height: 20px; }
.ann { margin-top: 8px; white-space: nowrap; }
.prem { padding-top: 3px; } .prem .v20 { margin-top: 9px; } .prem .sm { margin-top: 8px; }
.settle { margin-top: 19px; height: 73px; align-items: start; } .settle .badge { margin-top: 9px; } .settle .v18 { margin-top: 9px; }
.next { height: 80px; } .next .row { display: flex; justify-content: space-between; align-items: center; margin-top: 8px; }
.lim { margin: 16px 0; } .struct { height: 80px; } .struct .two { margin-top: 8px; }
.tiles { margin-top: 12px; }
.tile { border: 1px solid; border-radius: 8px; padding: 12px; height: 110px; }
.th { display: flex; align-items: center; gap: 8px; font-size: 12px; line-height: 16px; font-weight: 500; margin-bottom: 4px; }
.pur { background: linear-gradient(135deg, #2b1a4a, #15234a); border-color: #3d2868; color: #c084fc; }
.ora { background: linear-gradient(135deg, #36211f, #371b24); border-color: #5f2d20; color: #fb923c; }
.rd { background: linear-gradient(135deg, #371b24, #351f20); border-color: #64232b; color: #f87171; }

.inst { display: flex; align-items: center; height: 24px; margin: 28px 0 20px 4px; } .sym { font-size: 16px; margin: 0 auto 0 12px; }
.oi { height: 80px; } .oi .two { margin-top: 8px; column-gap: 8px; }
.vols { margin-top: 19px; row-gap: 15px; } .vols .v18 { margin-top: 9px; height: 32px; line-height: 27px; } .vols .upd { margin-top: 9px; }
.vols > div { height: 61px; }
.risk { margin-top: 12px; } .risk .v18 { line-height: 28px; margin-top: 8px; }
.matrix { margin-top: 12px; height: 100px; } .matrix .two { margin-top: 12px; }

.micro { margin-top: 24px; height: 150px; border: 1px solid #374151; background: linear-gradient(135deg, #1f2937, #18212f); padding: 16px; }
.mh { display: flex; align-items: center; } .mh strong { font-size: 16px; line-height: 24px; font-weight: 600; color: #fff; width: 180px; margin-left: 8px; } .mh .badge { margin-left: auto; }
.three { display: grid; grid-template-columns: repeat(3, 1fr); gap: 16px; margin-top: 12px; }
.three > div:last-child { white-space: nowrap; }
.mono { display: block; font: 700 12.800px/20px "DejaVu Sans Mono", monospace; color: #fff; margin-top: 3px; }
.pv { margin-top: 16px; } .pv .box { height: 124px; } .pv .big { margin-top: 8px; } .pv .sm { margin-top: 8px; }
.inst2 { margin-top: 16px; height: 156px; padding: 16px; }
.ih { display: flex; align-items: center; gap: 8px; font-size: 14px; line-height: 20px; font-weight: 600; color: #fff; }
.foot { display: grid; grid-template-columns: 148px 148px; gap: 16px; margin-top: 12px; }
.fr { display: flex; justify-content: space-between; } .fr + .fr { margin-top: 12px; }
.fr > span:first-child { width: 70px; }
.fc:last-child .fr > span:first-child { width: auto; }
.fc:last-child .fr { height: 16px; }
.fc .badge { margin-top: 5px; }
.fc .lg { position: relative; height: 38px; border-radius: 19px; line-height: 16px; white-space: normal; width: 93px; margin: 5px -20px 0 0; padding-top: 2px; }
.mono12 { font: 700 11px/16px "DejaVu Sans Mono", monospace; } .lv { font-weight: 400; width: 50px; }
.fc:last-child .fr .simpul { width: 90px; }
.more { margin-top: 16px; height: 60px; }

.sbar { margin-left: auto; width: 16px; background: #fcfcfc; position: relative; }
.sbar i { position: absolute; }
.up { left: 3px; top: 4px; border: 5px solid transparent; border-top: 0; border-bottom: 7px solid #8b8b8b; }
.down { left: 3px; bottom: 4px; border: 5px solid transparent; border-bottom: 0; border-top: 7px solid #8b8b8b; }
.thumb { left: 4px; top: 96px; width: 8px; height: 39px; border-radius: 4px; background: #8b8b8b; }

/* taskbar */
.taskbar { height: 48px; flex: none; border-top: 1px solid #4a4742; background: linear-gradient(90deg, #2c2319 0, #2b2319 14%, #252421 19%, #1e2529 27%, #2a2518 38%, #1f2528 45%, #242424 55%, #20262a 68%, #2a2416 80%, #232424 100%); display: flex; align-items: center; }
.apps { display: flex; gap: 4.100px; padding-left: 12.500px; }
.apps span { position: relative; width: 40px; height: 40px; border-radius: 4px; display: grid; place-items: center; }
.apps .on { background: #323232; }
.on::after { content: ""; position: absolute; left: 12px; bottom: 1px; width: 16px; height: 3px; border-radius: 2px; background: #4cc2ff; }
.tm { position: absolute; left: 11px; top: 12px; color: #fff; font-size: 10px; line-height: 14px; }
.tray { margin-left: auto; display: flex; align-items: center; color: #fff; padding-right: 20px; }
.wifi { margin-left: 18px; } .snd { margin-left: 7px; }
.clk { width: 77px; text-align: right; line-height: 16px; letter-spacing: -.25px; margin-top: -1px; }

/* translate bubble */
.popup { position: absolute; left: 1378px; top: 80px; width: 404px; height: 127px; border-radius: 12px; border: 1px solid #4b4934; background: #1c1b13; overflow: hidden; box-shadow: 0 2px 6px #0008; color: #e8e4d6; }
.ph { display: flex; align-items: flex-end; height: 39px; margin-left: 16px; }
.p1, .p2 { height: 33px; line-height: 36px; text-align: center; font-weight: 600; font-size: 12.500px; letter-spacing: -.1px; color: #cfcbb8; }
.p1 { width: 143px; border-bottom: 1px solid #46464a; } .p2 { width: 159px; border-bottom: 2px solid #d4c966; color: #d4c04a; }
.pd { margin: 0 0 9px 18px; } .px { margin: 0 0 9px 25px; }
.pc { display: flex; align-items: center; height: 46px; padding-left: 16px; } .pc i { width: 16px; height: 16px; border-radius: 2px; background: #d4c966; margin-right: 12px; } .pc span { letter-spacing: -.3px; margin-top: -1px; }
.pf { height: 42px; border-top: 1px solid #45453f; background: #27251b; padding-left: 19px; line-height: 33px; color: #68676a; letter-spacing: -.35px; } .pf b { font: 500 13.500px Lato, sans-serif; letter-spacing: -.4px; }
.pf span { margin-left: -1px; }
```
